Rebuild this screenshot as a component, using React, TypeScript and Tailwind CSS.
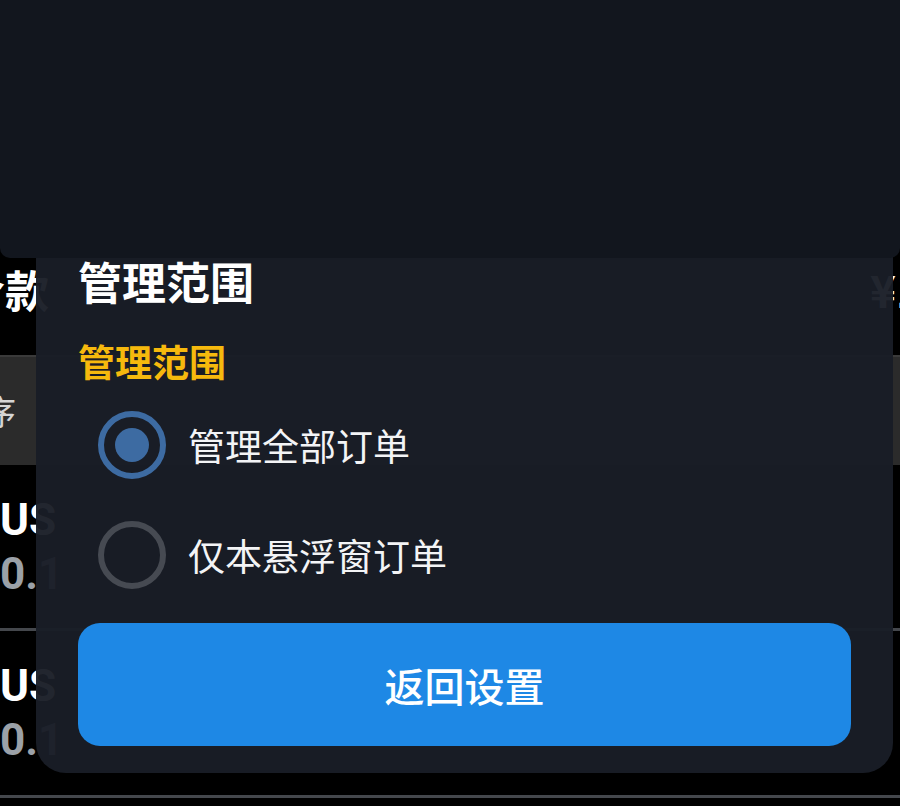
import React from "react";

const cjk = { fontFamily: '"Noto Sans CJK SC", "Noto Sans", sans-serif' };
const latin = { fontFamily: 'Roboto, "Noto Sans CJK SC", sans-serif' };

function Radio({ checked }: { checked: boolean }) {
  return (
    <span
      className={
        "flex h-[68px] w-[68px] shrink-0 items-center justify-center rounded-full border-[6px] " +
        (checked ? "border-[#3d6ba2]" : "border-[#464a52]")
      }
    >
      {checked && <span className="h-[34px] w-[34px] rounded-full bg-[#3d6ba2]" />}
    </span>
  );
}

function Option({ label, checked }: { label: string; checked: boolean }) {
  return (
    <div className="ml-[20px] flex h-[70px] items-center gap-[22px]">
      <Radio checked={checked} />
      <span className="text-[37px] leading-[44px] text-[#f3f4f6]" style={cjk}>
        {label}
      </span>
    </div>
  );
}

export default function App() {
  return (
    <div className="relative h-[806px] w-[900px] overflow-hidden bg-black" style={cjk}>
      {/* page underneath */}
      <div className="flex flex-col">
        <div className="h-[258px]" />
        <div className="flex h-[97px] items-start justify-between pt-[4px]">
          <span className="-ml-[39px] text-[44px] font-bold leading-[54px] text-white">合款</span>
          <span className="-mr-[22px] text-[44px] font-bold leading-[54px] text-white">¥1</span>
        </div>
        <div className="flex h-[110px] items-center border-t-2 border-[#3a3a3a] bg-[#2b2b2b]">
          <span className="-ml-[52px] text-[34px] leading-none text-[#d4d4d4]">排序</span>
        </div>
        <div className="flex h-[163px] flex-col justify-center" style={latin}>
          <span className="text-[44px] font-bold leading-[54px] text-white">US</span>
          <span className="text-[44px] font-bold leading-[54px] text-[#9ba1a8]">0.1</span>
        </div>
        <div className="h-[3px] bg-[#44474c]" />
        <div className="flex h-[164px] flex-col justify-center" style={latin}>
          <span className="text-[44px] font-bold leading-[54px] text-white">US</span>
          <span className="text-[44px] font-bold leading-[54px] text-[#9ba1a8]">0.1</span>
        </div>
        <div className="h-[3px] bg-[#44474c]" />
      </div>

      {/* dialog */}
      <div className="absolute left-[36px] top-[250px] w-[857px] rounded-b-[30px] bg-[rgba(25,29,38,0.96)] px-[42px] pb-[27px] pt-[5px]">
        <div className="text-[44px] font-bold leading-[52px] text-white">管理范围</div>
        <div className="mt-[32px] text-[37px] font-bold leading-[44px] text-[#f6b90d]">管理范围</div>
        <div className="mt-[27px] flex flex-col gap-[40px]">
          <Option label="管理全部订单" checked />
          <Option label="仅本悬浮窗订单" checked={false} />
        </div>
        <button className="mt-[33px] flex h-[123px] w-full items-center justify-center rounded-[22px] bg-[#1e88e5] text-[40px] font-medium text-white">
          返回设置
        </button>
      </div>

      {/* top sheet */}
      <div className="absolute left-0 top-0 h-[258px] w-[900px] rounded-b-[10px] bg-[#12161e]" />
    </div>
  );
}
